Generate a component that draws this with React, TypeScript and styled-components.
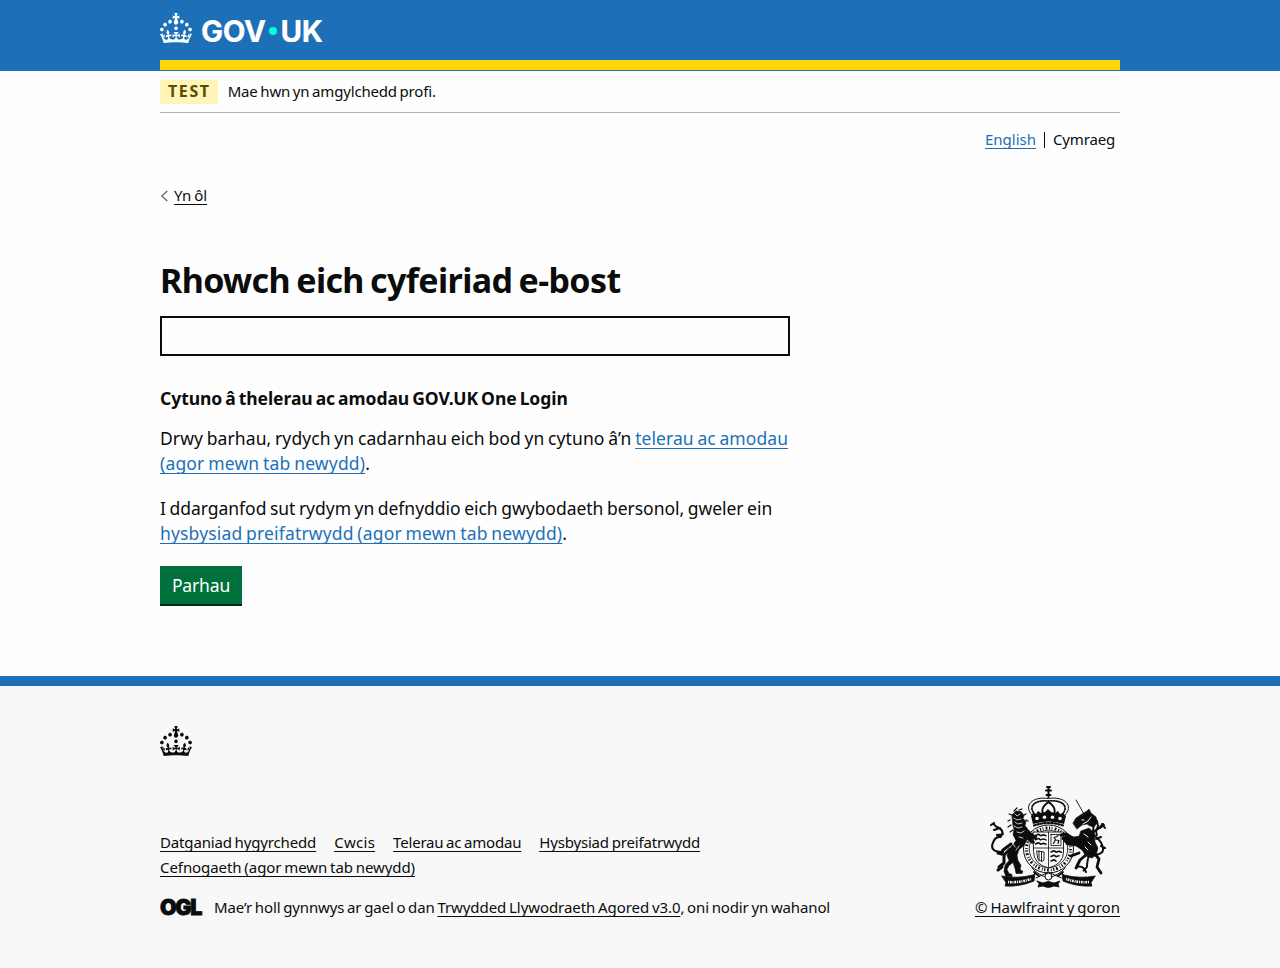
import React from "react";
import styled, { createGlobalStyle } from "styled-components";

const INK = "#0b0c0c";
const BLUE = "#1d70b8";

const GlobalStyle = createGlobalStyle`
  *, *::before, *::after { box-sizing: border-box; }
  html { background: #f8f8f8; }
  body {
    margin: 0;
    color: ${INK};
    font-family: "Noto Sans", "Open Sans", Arial, sans-serif;
    word-spacing: -1px;
  }
`;

const Page = styled.div`
  display: flex;
  flex-direction: column;
  min-height: 968px;
  background: #fefefe;
`;

const Container = styled.div`
  width: 960px;
  margin: 0 auto;
`;

const Header = styled.header`
  height: 71px;
  background: ${BLUE};
`;

const HeaderInner = styled(Container)`
  display: flex;
  flex-direction: column;
  justify-content: space-between;
  height: 70px;
  padding-top: 13px;
  border-bottom: 10px solid #ffd60c;
`;

const LogoLink = styled.a`
  display: flex;
  align-items: center;
  height: 35px;
  color: #fff;
  text-decoration: none;
`;

const LogoCrown = styled.span`
  display: flex;
  align-self: flex-start;
  margin-right: 9px;
`;

const LogoWord = styled.span`
  font: 700 29.5px/36px "Inter", Arial, sans-serif;
  letter-spacing: -0.4px;
  -webkit-text-stroke: 0.2px #fff;
`;

const LogoDot = styled.span`
  width: 8px;
  height: 8px;
  margin: 1px 4px 0 3px;
  border-radius: 50%;
  background: #00ffe0;
`;

const PhaseBanner = styled.div`
  display: flex;
  align-items: center;
  gap: 10px;
  height: 42px;
  border-bottom: 1px solid #b1b4b6;
`;

const Tag = styled.strong`
  height: 24px;
  padding: 0 7px 0 8px;
  background: #fff4b8;
  color: #594d00;
  font-size: 16px;
  line-height: 23px;
  letter-spacing: 1.6px;
`;

const Small = styled.span<{ $ls?: number }>`
  padding-bottom: 2px;
  font-size: 15px;
  line-height: 20px;
  letter-spacing: ${(p) => p.$ls ?? 0}px;
`;

const Link = styled.a<{ $ls?: number; $blue?: boolean }>`
  color: ${(p) => (p.$blue ? BLUE : INK)};
  letter-spacing: ${(p) => p.$ls ?? 0}px;
  text-decoration: underline;
  text-decoration-thickness: 1px;
  text-decoration-skip-ink: none;
  text-underline-offset: 3px;
`;

const SmallLink = styled(Link)`
  font-size: 15px;
  line-height: 20px;
`;

const LanguageNav = styled.nav`
  display: flex;
  justify-content: flex-end;
  align-items: center;
  height: 20px;
  margin: 17px 5px 0 0;
  ${SmallLink} { padding-bottom: 2px; }
`;

const LanguageDivider = styled.span`
  width: 1px;
  height: 16px;
  margin: 0 8px;
  background: ${INK};
`;

const BackRow = styled.div`
  display: flex;
  align-items: center;
  gap: 6px;
  height: 20px;
  margin-top: 36px;
  ${SmallLink} { padding-bottom: 2px; }
`;

const Main = styled.main`
  width: 630px;
  padding-top: 54px;
`;

const Title = styled.h1`
  margin: 0;
  font-size: 34px;
  line-height: 40px;
  letter-spacing: -0.62px;
  word-spacing: -2px;
`;

const Input = styled.input`
  display: block;
  width: 100%;
  height: 40px;
  margin: 16px 0 30px;
  border: 2px solid ${INK};
  border-radius: 0;
  background: #fefefe;
`;

const Subheading = styled.h2`
  margin: 0 0 15px;
  font-size: 17.5px;
  line-height: 25px;
  letter-spacing: -0.05px;
  word-spacing: -1.5px;
`;

const Paragraph = styled.p<{ $ls?: number }>`
  margin: 0 0 20px;
  font-size: 17.5px;
  line-height: 25px;
  letter-spacing: ${(p) => p.$ls ?? 0}px;
  white-space: nowrap;
`;

const Button = styled.button`
  display: block;
  width: 82px;
  height: 38px;
  padding: 0;
  border: 0;
  border-radius: 0;
  background: #00703c;
  box-shadow: 0 2px 0 #002d18;
  color: #fff;
  font: 400 17.5px/38px "Noto Sans", Arial, sans-serif;
  letter-spacing: -0.15px;
`;

const Footer = styled.footer`
  flex: 1;
  margin-top: 72px;
  padding-top: 40px;
  border-top: 10px solid ${BLUE};
  background: #f8f8f8;
`;

const FooterCrown = styled.div`
  display: flex;
  height: 60px;
`;

const FooterMeta = styled.div`
  display: flex;
  justify-content: space-between;
  align-items: flex-end;
  height: 131px;
`;

const FooterLinks = styled.div`
  display: flex;
  flex-wrap: wrap;
  column-gap: 18px;
  row-gap: 5px;
  width: 700px;
  margin-bottom: 20px;
`;

const Licence = styled.div`
  display: flex;
  align-items: center;
  height: 20px;
`;

const LicenceText = styled(Small)`
  padding-bottom: 0;
`;

const OglLogo = styled.span`
  width: 54px;
  font: 900 21.5px/20px "Inter", Arial, sans-serif;
  letter-spacing: -1.3px;
  -webkit-text-stroke: 0.8px ${INK};
`;

const Copyright = styled.div`
  display: flex;
  flex-direction: column;
  align-items: flex-end;
  gap: 9px;
`;

const ArmsHolder = styled.div`
  display: flex;
  margin-right: 14px;
`;

const Crown = () => (
  <svg width="32" height="30" viewBox="0 0 32 30" fill="currentColor" aria-hidden="true">
    <path d="M22.6 10.4c-1 .4-2-.1-2.4-1-.4-.9.1-2 1-2.4.9-.4 2 .1 2.4 1s-.1 2-1 2.4m-5.9 6.7c-.9.4-2-.1-2.4-1-.4-.9.1-2 1-2.4.9-.4 2 .1 2.4 1s-.1 2-1 2.4m10.8-3.7c-1 .4-2-.1-2.4-1-.4-.9.1-2 1-2.4.9-.4 2 .1 2.4 1s0 2-1 2.4m3.3 4.8c-1 .4-2-.1-2.4-1-.4-.9.1-2 1-2.4.9-.4 2 .1 2.4 1s-.1 2-1 2.4M17 4.7l2.3 1.2V2.5l-2.3.7-.2-.2.9-3h-3.4l.9 3-.2.2c-.1.1-2.3-.7-2.3-.7v3.4L15 4.7c.1.1.1.2.2.2l-1.3 4c-.1.2-.1.4-.1.6 0 1.1.8 2 1.9 2.2h.7c1-.2 1.9-1.1 1.9-2.1 0-.2 0-.4-.1-.6l-1.3-4c-.1-.2 0-.2.1-.3m-7.6 5.7c.9.4 2-.1 2.4-1 .4-.9-.1-2-1-2.4-.9-.4-2 .1-2.4 1s0 2 1 2.4m-5 3c.9.4 2-.1 2.4-1 .4-.9-.1-2-1-2.4-.9-.4-2 .1-2.4 1s.1 2 1 2.4m-3.2 4.8c.9.4 2-.1 2.4-1 .4-.9-.1-2-1-2.4-.9-.4-2 .1-2.4 1s0 2 1 2.4m14.8 11c4.4 0 8.6.3 12.3.8 1.1-4.5 2.4-7 3.7-8.8l-2.5-.9c.2 1.3.3 1.9 0 2.7-.4-.4-.8-1.1-1.1-2.3l-1.2 4c.7-.5 1.3-.8 2-.9-1.1 2.5-2.6 3.1-3.5 3-1.1-.2-1.7-1.2-1.5-2.1.3-1.2 1.5-1.5 2.1-.1 1.1-2.3-.8-3-2-2.3 1.9-1.9 2.1-3.5.6-5.6-2.1 1.6-2.1 3.2-1.2 5.5-1.2-1.4-3.2-.6-2.5 1.6.9-1.4 2.1-.5 1.9.8-.2 1.1-1.7 2.1-3.5 1.9-2.7-.2-2.9-2.1-2.9-3.6.7-.1 1.9.5 2.9 1.9l.4-4.3c-1.1 1.1-2.1 1.4-3.2 1.4.4-1.2 2.1-3 2.1-3h-5.4s1.7 1.9 2.1 3c-1.1 0-2.1-.2-3.2-1.4l.4 4.3c1-1.4 2.2-2 2.9-1.9-.1 1.5-.2 3.4-2.9 3.6-1.9.2-3.4-.8-3.5-1.9-.2-1.3 1-2.2 1.9-.8.7-2.3-1.2-3-2.5-1.6.9-2.2.9-3.9-1.2-5.5-1.5 2-1.3 3.7.6 5.6-1.2-.7-3.1 0-2 2.3.6-1.4 1.8-1.1 2.1.1.2.9-.3 1.9-1.5 2.1-.9.2-2.4-.5-3.5-3 .6 0 1.2.3 2 .9l-1.2-4c-.3 1.1-.7 1.9-1.1 2.3-.3-.8-.2-1.4 0-2.7l-2.9.9C1.3 23 2.6 25.5 3.7 30c3.7-.5 7.9-.8 12.3-.8" />
  </svg>
);

const BackArrow = () => (
  <svg width="8" height="12" viewBox="0 0 8 12" fill="none" stroke="#505a5f" strokeWidth="1.1" aria-hidden="true">
    <path d="M7.3 1 1.8 6l5.500 5" />
  </svg>
);

const RoyalArms = () => (
  <svg width="116" height="102" viewBox="0 0 116 102" fill="none" stroke={INK} strokeLinecap="round" strokeLinejoin="round" aria-hidden="true">
    {/* crown */}
    <path d="M58.500 1v10M56 4.500h5M57 1h3M56.500 9h4" strokeWidth="2" />
    <path d="M42 29c-9-9 0-19 16.500-16.500C75 10 84 20 75 29" strokeWidth="1" />
    <path d="M44.500 28c-7-8 1-14.500 14-13 13-1.500 21 5 14 13" strokeWidth="1.800" strokeDasharray="1 1.600" />
    <path d="M53 28c-2-5 1-9 5.500-12 4.500 3 7.500 7 5.500 12" strokeWidth="2" strokeDasharray="1.200 1.300" />
    <path d="M41 30l2-3 3 1 2-3 3 2 4-1 3-3 3 3 4 1 3-2 2 3 3-1 3 3-2 8q-15.500-5-31 0z" fill={INK} stroke="none" />
    <g fill="#f8f8f8" stroke="none">
      <circle cx="47" cy="32.500" r="1.800" /><circle cx="54.500" cy="31.300" r="1.800" />
      <circle cx="62.500" cy="31.300" r="1.800" /><circle cx="70" cy="32.500" r="1.800" />
    </g>
    <path d="M44 39.500q14.500-5 29 0" strokeWidth="2.200" strokeDasharray="1.500 2" />
    {/* garter and quartered shield */}
    <ellipse cx="58.500" cy="63" rx="25" ry="24" fill="#f8f8f8" strokeWidth="1" />
    <ellipse cx="58.500" cy="63" rx="22" ry="21" strokeWidth="3" strokeLinecap="butt" strokeDasharray="1.200 1.500 .8 2.200 1.800 1.700" />
    <ellipse cx="58.500" cy="63" rx="19.300" ry="18.800" strokeWidth=".8" />
    <path d="M43.500 46h30v20q0 12-15 16-15-4-15-16z" fill="#f8f8f8" strokeWidth=".9" />
    <path d="M58.500 46v36M43.500 62h30" strokeWidth=".8" />
    <g strokeWidth="1.500">
      <path d="M45.500 49.500l3-1.300 2 1.500 3-1 2.500 1M45.500 53.700l3-1.300 2 1.500 3-1 2.500 1M45.500 58l3-1.300 2 1.500 3-1 2.500 1" />
      <path d="M61 66l3-1.300 2 1.500 3-1 2.500 1M61 70.500l3-1.300 2 1.500 3-1M61 75l3-1.300 2 1.500" />
      <path d="M61 48.500h10v11h-10z" strokeWidth=".9" strokeDasharray="1.400 .9" />
      <path d="M63.500 57.500l2-4-1.500-2 3-1 1-1M66 54l3 .5-1 3" strokeWidth="1.200" />
      <path d="M47 65l7 1v8q-2 3-6-1zM49 65v10M51.500 66v9" strokeWidth=".9" />
    </g>
    {/* lion */}
    <path d="M24 25l3-3M29 24l3-1M22 29l-3-1M34 29l2-1M20 34l-2 1M36 34l2 1M21 39l-3 2M23 44l-3 2" strokeWidth="1.200" />
    <path
      d="M22 29l4-4 5 .5 3 4-1 3 3 3-1 4 3 4 5 5 4 2-1 3-4-1 3 4-3 1-5-4-3 6-5 4-2 6 1 5 3 5-1 4 3 2-1 2h-6l-1-5-2-6-4 3-2 4 2 4 3 1v2h-6l-2-5 1-6 4-5-2-5 3-7 6-8-3-6 1-5-1-4z"
      fill={INK} strokeWidth=".6"
    />
    <path d="M21 58l-8 6-2 4M20 63l-6 6v8l-5 4M12 68l-4-1M12 81l-4 3" strokeWidth="3" />
    <path d="M25 28l2 2 3-2M24 32l3 2 4-1M25 36l3 2 4-1M24 40l4 2 4-1M27 46l4 1 3-2M29 51l4 1M23 57l2 4M29 60l-3 4" stroke="#f8f8f8" strokeWidth=".8" />
    <path d="M13 66Q0 66 2.500 58t8-7Q15 45 9 42t-5-5M4 37l-3 2M10 42l-6 2M13 48l-6 1" strokeWidth="2.100" />
    {/* unicorn */}
    <path d="M86 14l8 14" strokeWidth=".9" />
    <path d="M83 37l3-5 6-4 5-3 2-2 2 4 5 4 1 6-3 4-4-1-3-2-5 1-5 4z" fill={INK} strokeWidth=".6" />
    <path d="M103 30l4 5 1 5-2 5 1 5M100 31l4 6-1 8" strokeWidth="2" strokeDasharray="1.500 1.300" />
    <path d="M91 45l8-3 5 5 1 9 3 6-2 7-4 3-6-2-4-6-6-4-9-1-5-6 3-3 9 1 5-1z" fill={INK} strokeWidth=".6" />
    <path d="M80 57l-7-5M86 54l-10-6M76 48l-5 1" strokeWidth="3" />
    <path d="M104 67l5 6-2 8 4 6M97 68l-7 6-4 8M89 67l-8 3" strokeWidth="2.800" />
    <path d="M92 34h2M93 38l5-3 3-4M94 48l4 3M98 56l3 3M95 61l3 3" stroke="#f8f8f8" strokeWidth="1" />
    <path d="M105 69q9-1 8-7t-7-11 2-8l5-5M112 38l3 4M110 42l4-3M106 53l5-2M111 60l4 2" strokeWidth="2" />
    <path d="M97 57q4 5 2 12t-2 12l-4 4M87 81q6-2 9 5" strokeWidth="2" strokeDasharray="1.600 1.200" />
    {/* motto scroll */}
    <g fill={INK} strokeWidth=".8">
      <path d="M12 90q15 3 31-1l2-2-1 8q-14 6-29 5l1-3z" />
      <path d="M105 90q-15 3-31-1l-2-2 1 8q14 6 29 5l-1-3z" />
      <path d="M47 95l6 2q5-3 11 0l6-2-2 3 1 3-5-1q-6 3-11 0l-5 1 1-3z" />
    </g>
    <path d="M18 96q11 1 23-3M99 96q-11 1-23-3" stroke="#f8f8f8" strokeWidth="2.600" strokeLinecap="butt" strokeDasharray="1 .9 1.800 .8" />
    <path d="M42 82q6 7 16.500 10 10.500-3 16.500-10M46 92q7-3 12.500-6 6 3 13 6" strokeWidth="1" />
    <path d="M44 86l5 4M73 86l-5 4" strokeWidth="1.800" />
    <circle cx="58.500" cy="90.500" r="3.500" fill="#f8f8f8" strokeWidth="1" />
  </svg>
);

const footerLinks: [string, number][] = [
  ["Datganiad hygyrchedd", -0.15],
  ["Cwcis", 0.28],
  ["Telerau ac amodau", -0.2],
  ["Hysbysiad preifatrwydd", -0.17],
  ["Cefnogaeth (agor mewn tab newydd)", -0.07],
];

export default function App() {
  return (
    <Page>
      <GlobalStyle />
      <Header>
        <HeaderInner>
          <LogoLink aria-label="GOV.UK">
            <LogoCrown><Crown /></LogoCrown>
            <LogoWord>GOV</LogoWord>
            <LogoDot />
            <LogoWord>UK</LogoWord>
          </LogoLink>
        </HeaderInner>
      </Header>

      <Container>
        <PhaseBanner>
          <Tag>TEST</Tag>
          <Small $ls={-0.18}>Mae hwn yn amgylchedd profi.</Small>
        </PhaseBanner>
        <LanguageNav>
          <SmallLink $blue href="#en">English</SmallLink>
          <LanguageDivider />
          <Small $ls={-0.17}>Cymraeg</Small>
        </LanguageNav>
        <BackRow>
          <BackArrow />
          <SmallLink href="#back">Yn ôl</SmallLink>
        </BackRow>

        <Main>
          <Title>Rhowch eich cyfeiriad e-bost</Title>
          <Input type="email" aria-label="Rhowch eich cyfeiriad e-bost" />
          <Subheading>Cytuno â thelerau ac amodau GOV.UK One Login</Subheading>
          <Paragraph $ls={0.1}>
            Drwy barhau, rydych yn cadarnhau eich bod yn cytuno â’n{" "}
            <Link $blue $ls={0.08} href="#terms">telerau ac amodau</Link>
            <br />
            <Link $blue $ls={0.17} href="#terms">(agor mewn tab newydd)</Link>.
          </Paragraph>
          <Paragraph $ls={-0.02}>
            I ddarganfod sut rydym yn defnyddio eich gwybodaeth bersonol, gweler ein<br />
            <Link $blue $ls={0.16} href="#privacy">hysbysiad preifatrwydd (agor mewn tab newydd)</Link>.
          </Paragraph>
          <Button>Parhau</Button>
        </Main>
      </Container>

      <Footer>
        <Container>
          <FooterCrown><Crown /></FooterCrown>
          <FooterMeta>
            <div>
              <FooterLinks>
                {footerLinks.map(([label, ls]) => (
                  <SmallLink key={label} $ls={ls} href="#footer">{label}</SmallLink>
                ))}
              </FooterLinks>
              <Licence>
                <OglLogo>OGL</OglLogo>
                <LicenceText $ls={-0.13}>
                  Mae’r holl gynnwys ar gael o dan{" "}
                  <Link $ls={-0.07} href="#licence">Trwydded Llywodraeth Agored v3.0</Link>, oni nodir yn wahanol
                </LicenceText>
              </Licence>
            </div>
            <Copyright>
              <ArmsHolder><RoyalArms /></ArmsHolder>
              <SmallLink $ls={0.02} href="#copyright">© Hawlfraint y goron</SmallLink>
            </Copyright>
          </FooterMeta>
        </Container>
      </Footer>
    </Page>
  );
}
